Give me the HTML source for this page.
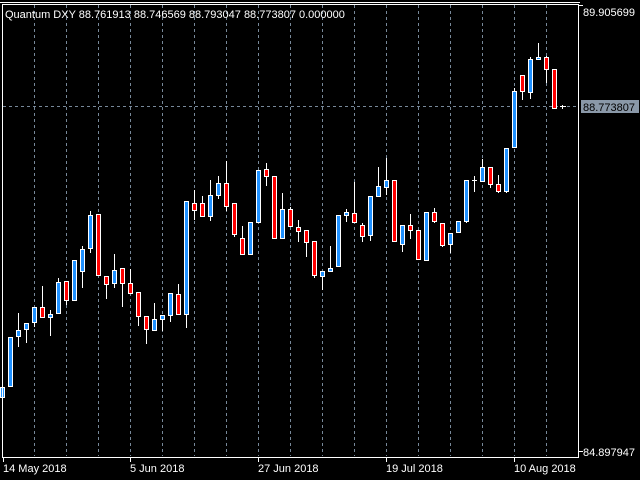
<!DOCTYPE html>
<html><head><meta charset="utf-8"><style>
html,body{margin:0;padding:0;background:#000;width:640px;height:480px;overflow:hidden}
svg{display:block}
text{font-family:"Liberation Sans",sans-serif;font-size:11px;fill:#fff}
.w{fill:#fff}.b{fill:#1e90ff}.r{fill:#f00}
</style></head><body>
<svg width="640" height="480" viewBox="0 0 640 480" xmlns="http://www.w3.org/2000/svg">
<rect width="640" height="480" fill="#000"/>
<g stroke="#778899" stroke-width="1" stroke-dasharray="3,3">
<path d="M34.5 5V456M66.5 5V456M98.5 5V456M130.5 5V456M162.5 5V456M194.5 5V456M226.5 5V456M258.5 5V456M290.5 5V456M322.5 5V456M354.5 5V456M386.5 5V456M418.5 5V456M450.5 5V456M482.5 5V456M514.5 5V456M546.5 5V456"/>
<path d="M3 106.5H578"/>
</g>
<g id="c"></g>
<g>
<!-- candles: wick, outer body, inner body -->
<rect class="w" x="2" y="387" width="1" height="11"/><rect class="w" x="0" y="387" width="5" height="11"/><rect class="b" x="1" y="388" width="3" height="9"/>
<rect class="w" x="8" y="337" width="5" height="50"/><rect class="b" x="9" y="338" width="3" height="48"/>
<rect class="w" x="18" y="313" width="1" height="34"/><rect class="w" x="16" y="330" width="5" height="7"/><rect class="b" x="17" y="331" width="3" height="5"/>
<rect class="w" x="26" y="323" width="1" height="20"/><rect class="w" x="24" y="323" width="5" height="7"/><rect class="b" x="25" y="324" width="3" height="5"/>
<rect class="w" x="34" y="307" width="1" height="20"/><rect class="w" x="32" y="307" width="5" height="16"/><rect class="b" x="33" y="308" width="3" height="14"/>
<rect class="w" x="42" y="286" width="1" height="32"/><rect class="w" x="40" y="307" width="5" height="11"/><rect class="r" x="41" y="308" width="3" height="9"/>
<rect class="w" x="50" y="310" width="1" height="26"/><rect class="w" x="48" y="314" width="5" height="4"/><rect class="b" x="49" y="315" width="3" height="2"/>
<rect class="w" x="58" y="278" width="1" height="36"/><rect class="w" x="56" y="282" width="5" height="32"/><rect class="b" x="57" y="283" width="3" height="30"/>
<rect class="w" x="66" y="281" width="1" height="24"/><rect class="w" x="64" y="281" width="5" height="20"/><rect class="r" x="65" y="282" width="3" height="18"/>
<rect class="w" x="72" y="260" width="5" height="41"/><rect class="b" x="73" y="261" width="3" height="39"/>
<rect class="w" x="82" y="246" width="1" height="42"/><rect class="w" x="80" y="249" width="5" height="23"/><rect class="b" x="81" y="250" width="3" height="21"/>
<rect class="w" x="90" y="211" width="1" height="42"/><rect class="w" x="88" y="215" width="5" height="34"/><rect class="b" x="89" y="216" width="3" height="32"/>
<rect class="w" x="96" y="214" width="5" height="62"/><rect class="r" x="97" y="215" width="3" height="60"/>
<rect class="w" x="106" y="276" width="1" height="23"/><rect class="w" x="104" y="276" width="5" height="9"/><rect class="r" x="105" y="277" width="3" height="7"/>
<rect class="w" x="114" y="254" width="1" height="34"/><rect class="w" x="112" y="270" width="5" height="14"/><rect class="b" x="113" y="271" width="3" height="12"/>
<rect class="w" x="122" y="268" width="1" height="39"/><rect class="w" x="120" y="268" width="5" height="16"/><rect class="r" x="121" y="269" width="3" height="14"/>
<rect class="w" x="130" y="269" width="1" height="25"/><rect class="w" x="128" y="283" width="5" height="11"/><rect class="r" x="129" y="284" width="3" height="9"/>
<rect class="w" x="138" y="292" width="1" height="34"/><rect class="w" x="136" y="292" width="5" height="25"/><rect class="r" x="137" y="293" width="3" height="23"/>
<rect class="w" x="146" y="316" width="1" height="28"/><rect class="w" x="144" y="316" width="5" height="14"/><rect class="r" x="145" y="317" width="3" height="12"/>
<rect class="w" x="154" y="303" width="1" height="28"/><rect class="w" x="152" y="319" width="5" height="12"/><rect class="b" x="153" y="320" width="3" height="10"/>
<rect class="w" x="162" y="315" width="1" height="16"/><rect class="w" x="160" y="315" width="5" height="5"/><rect class="b" x="161" y="316" width="3" height="3"/>
<rect class="w" x="170" y="293" width="1" height="29"/><rect class="w" x="168" y="293" width="5" height="23"/><rect class="b" x="169" y="294" width="3" height="21"/>
<rect class="w" x="178" y="284" width="1" height="31"/><rect class="w" x="176" y="294" width="5" height="21"/><rect class="r" x="177" y="295" width="3" height="19"/>
<rect class="w" x="186" y="201" width="1" height="127"/><rect class="w" x="184" y="201" width="5" height="114"/><rect class="b" x="185" y="202" width="3" height="112"/>
<rect class="w" x="194" y="190" width="1" height="30"/><rect class="w" x="192" y="203" width="5" height="8"/><rect class="r" x="193" y="204" width="3" height="6"/>
<rect class="w" x="202" y="196" width="1" height="21"/><rect class="w" x="200" y="203" width="5" height="14"/><rect class="r" x="201" y="204" width="3" height="12"/>
<rect class="w" x="210" y="180" width="1" height="41"/><rect class="w" x="208" y="195" width="5" height="22"/><rect class="b" x="209" y="196" width="3" height="20"/>
<rect class="w" x="218" y="176" width="1" height="23"/><rect class="w" x="216" y="183" width="5" height="13"/><rect class="b" x="217" y="184" width="3" height="11"/>
<rect class="w" x="226" y="161" width="1" height="50"/><rect class="w" x="224" y="183" width="5" height="24"/><rect class="r" x="225" y="184" width="3" height="22"/>
<rect class="w" x="234" y="203" width="1" height="34"/><rect class="w" x="232" y="203" width="5" height="32"/><rect class="r" x="233" y="204" width="3" height="30"/>
<rect class="w" x="242" y="226" width="1" height="29"/><rect class="w" x="240" y="238" width="5" height="17"/><rect class="r" x="241" y="239" width="3" height="15"/>
<rect class="w" x="248" y="222" width="5" height="33"/><rect class="b" x="249" y="223" width="3" height="31"/>
<rect class="w" x="256" y="170" width="5" height="53"/><rect class="b" x="257" y="171" width="3" height="51"/>
<rect class="w" x="266" y="163" width="1" height="23"/><rect class="w" x="264" y="169" width="5" height="8"/><rect class="r" x="265" y="170" width="3" height="6"/>
<rect class="w" x="272" y="176" width="5" height="63"/><rect class="r" x="273" y="177" width="3" height="61"/>
<rect class="w" x="282" y="193" width="1" height="46"/><rect class="w" x="280" y="209" width="5" height="30"/><rect class="b" x="281" y="210" width="3" height="28"/>
<rect class="w" x="290" y="207" width="1" height="20"/><rect class="w" x="288" y="209" width="5" height="18"/><rect class="r" x="289" y="210" width="3" height="16"/>
<rect class="w" x="298" y="220" width="1" height="22"/><rect class="w" x="296" y="227" width="5" height="5"/><rect class="r" x="297" y="228" width="3" height="3"/>
<rect class="w" x="306" y="230" width="1" height="27"/><rect class="w" x="304" y="230" width="5" height="13"/><rect class="r" x="305" y="231" width="3" height="11"/>
<rect class="w" x="314" y="241" width="1" height="37"/><rect class="w" x="312" y="241" width="5" height="35"/><rect class="r" x="313" y="242" width="3" height="33"/>
<rect class="w" x="322" y="271" width="1" height="19"/><rect class="w" x="320" y="271" width="5" height="6"/><rect class="b" x="321" y="272" width="3" height="4"/>
<rect class="w" x="330" y="246" width="1" height="26"/><rect class="w" x="328" y="268" width="5" height="4"/><rect class="b" x="329" y="269" width="3" height="2"/>
<rect class="w" x="336" y="215" width="5" height="52"/><rect class="b" x="337" y="216" width="3" height="50"/>
<rect class="w" x="346" y="209" width="1" height="13"/><rect class="w" x="344" y="212" width="5" height="4"/><rect class="b" x="345" y="213" width="3" height="2"/>
<rect class="w" x="354" y="182" width="1" height="41"/><rect class="w" x="352" y="213" width="5" height="10"/><rect class="r" x="353" y="214" width="3" height="8"/>
<rect class="w" x="362" y="223" width="1" height="19"/><rect class="w" x="360" y="225" width="5" height="12"/><rect class="r" x="361" y="226" width="3" height="10"/>
<rect class="w" x="370" y="196" width="1" height="45"/><rect class="w" x="368" y="196" width="5" height="40"/><rect class="b" x="369" y="197" width="3" height="38"/>
<rect class="w" x="378" y="167" width="1" height="30"/><rect class="w" x="376" y="186" width="5" height="11"/><rect class="b" x="377" y="187" width="3" height="9"/>
<rect class="w" x="386" y="158" width="1" height="37"/><rect class="w" x="384" y="180" width="5" height="8"/><rect class="b" x="385" y="181" width="3" height="6"/>
<rect class="w" x="392" y="180" width="5" height="62"/><rect class="r" x="393" y="181" width="3" height="60"/>
<rect class="w" x="402" y="225" width="1" height="27"/><rect class="w" x="400" y="225" width="5" height="20"/><rect class="b" x="401" y="226" width="3" height="18"/>
<rect class="w" x="410" y="214" width="1" height="25"/><rect class="w" x="408" y="225" width="5" height="6"/><rect class="r" x="409" y="226" width="3" height="4"/>
<rect class="w" x="416" y="230" width="5" height="30"/><rect class="r" x="417" y="231" width="3" height="28"/>
<rect class="w" x="424" y="212" width="5" height="49"/><rect class="b" x="425" y="213" width="3" height="47"/>
<rect class="w" x="434" y="208" width="1" height="15"/><rect class="w" x="432" y="212" width="5" height="10"/><rect class="r" x="433" y="213" width="3" height="8"/>
<rect class="w" x="442" y="223" width="1" height="24"/><rect class="w" x="440" y="223" width="5" height="23"/><rect class="r" x="441" y="224" width="3" height="21"/>
<rect class="w" x="450" y="233" width="1" height="20"/><rect class="w" x="448" y="233" width="5" height="12"/><rect class="b" x="449" y="234" width="3" height="10"/>
<rect class="w" x="456" y="221" width="5" height="12"/><rect class="b" x="457" y="222" width="3" height="10"/>
<rect class="w" x="466" y="180" width="1" height="43"/><rect class="w" x="464" y="180" width="5" height="42"/><rect class="b" x="465" y="181" width="3" height="40"/>
<rect class="w" x="474" y="176" width="1" height="16"/><rect class="w" x="472" y="180" width="5" height="1"/>
<rect class="w" x="482" y="159" width="1" height="23"/><rect class="w" x="480" y="167" width="5" height="15"/><rect class="b" x="481" y="168" width="3" height="13"/>
<rect class="w" x="490" y="167" width="1" height="21"/><rect class="w" x="488" y="167" width="5" height="18"/><rect class="r" x="489" y="168" width="3" height="16"/>
<rect class="w" x="498" y="175" width="1" height="18"/><rect class="w" x="496" y="184" width="5" height="8"/><rect class="r" x="497" y="185" width="3" height="6"/>
<rect class="w" x="506" y="148" width="1" height="45"/><rect class="w" x="504" y="148" width="5" height="44"/><rect class="b" x="505" y="149" width="3" height="42"/>
<rect class="w" x="514" y="88" width="1" height="60"/><rect class="w" x="512" y="91" width="5" height="57"/><rect class="b" x="513" y="92" width="3" height="55"/>
<rect class="w" x="522" y="75" width="1" height="25"/><rect class="w" x="520" y="75" width="5" height="17"/><rect class="r" x="521" y="76" width="3" height="15"/>
<rect class="w" x="530" y="57" width="1" height="42"/><rect class="w" x="528" y="59" width="5" height="34"/><rect class="b" x="529" y="60" width="3" height="32"/>
<rect class="w" x="538" y="43" width="1" height="17"/><rect class="w" x="536" y="57" width="5" height="3"/><rect class="b" x="537" y="58" width="3" height="1"/>
<rect class="w" x="546" y="56" width="1" height="27"/><rect class="w" x="544" y="57" width="5" height="13"/><rect class="r" x="545" y="58" width="3" height="11"/>
<rect class="w" x="552" y="69" width="5" height="40"/><rect class="r" x="553" y="70" width="3" height="38"/>
<rect class="w" x="560" y="106" width="6" height="1"/><rect class="w" x="562" y="105" width="1" height="4"/>
</g>
<!-- frame -->
<rect class="w" x="0" y="2" width="580" height="1"/>
<rect class="w" x="2" y="4" width="577" height="1"/>
<rect class="w" x="2" y="4" width="1" height="454"/>
<rect class="w" x="578" y="4" width="1" height="454"/>
<rect class="w" x="2" y="457" width="577" height="1"/>
<rect class="w" x="579" y="5" width="4" height="1"/>
<rect class="w" x="579" y="451" width="4" height="1"/>
<rect class="w" x="3" y="457" width="1" height="5"/>
<rect class="w" x="130" y="457" width="1" height="5"/>
<rect class="w" x="258" y="457" width="1" height="5"/>
<rect class="w" x="386" y="457" width="1" height="5"/>
<rect class="w" x="514" y="457" width="1" height="5"/>
<text x="5" y="18">Quantum DXY 88.761913 88.746569 88.793047 88.773807 0.000000</text>
<text x="583" y="16">89.905699</text>
<text x="583" y="456">84.897947</text>
<rect x="581" y="100" width="58" height="13" fill="#8a98a8"/>
<text x="583" y="111" style="fill:#000">88.773807</text>
<text x="3" y="472">14 May 2018</text>
<text x="130" y="472">5 Jun 2018</text>
<text x="258" y="472">27 Jun 2018</text>
<text x="386" y="472">19 Jul 2018</text>
<text x="514" y="472">10 Aug 2018</text>
</svg>
</body></html>
